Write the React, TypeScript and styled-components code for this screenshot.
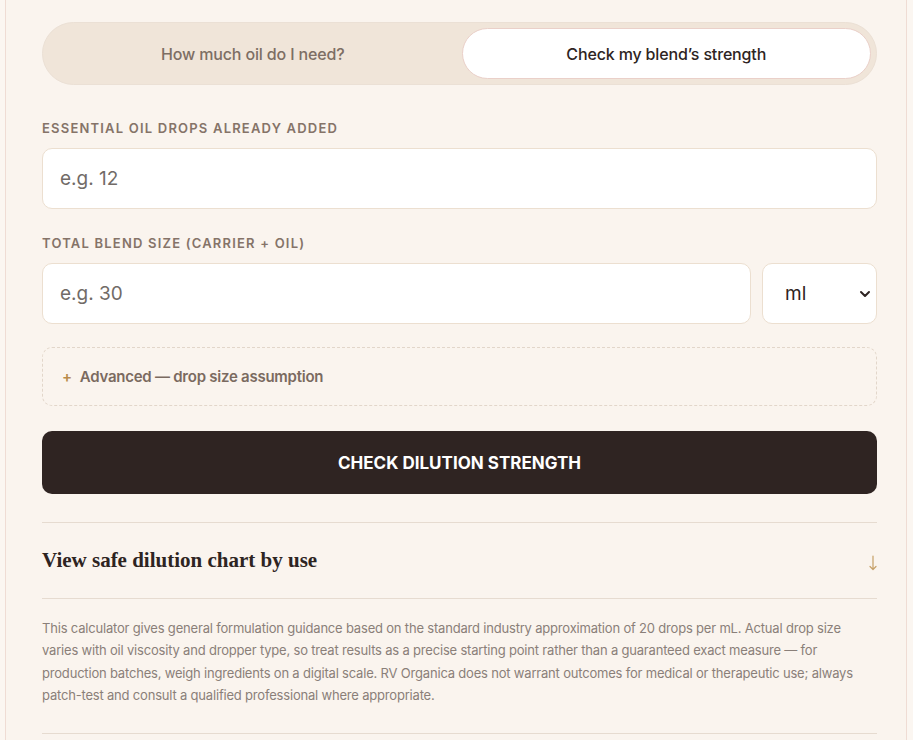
import {createGlobalStyle, styled} from "styled-components";

const GlobalStyle = createGlobalStyle`
    html, body {
        margin: 0;
        padding: 0;
        background: #fbf6f1;
    }

    body {
        font-family: Inter, "Noto Sans", sans-serif;
        color: #2e2422;
    }

    * {
        box-sizing: border-box;
    }
`

const Card = styled.div`
    margin: -1px 6px 0 5px;
    padding: 23px 29px 40px 36px;
    background: #faf4ee;
    border: 1px solid #efdcd4;
    border-top: none;
    display: flex;
    flex-direction: column;
`

const Tabs = styled.div`
    display: grid;
    grid-template-columns: 1fr 1fr;
    gap: 4px;
    height: 63px;
    padding: 5px;
    border-radius: 999px;
    background: #f0e5d9;
    border: 1px solid #ebe0d5;
`

const Tab = styled.button<{ $active?: boolean }>`
    border-radius: 999px;
    font-family: Inter, "Noto Sans", sans-serif;
    font-size: 16px;
    font-weight: 500;
    letter-spacing: -0.15px;
    cursor: pointer;
    color: ${p => p.$active ? '#2e2422' : '#7d6e64'};
    background: ${p => p.$active ? '#ffffff' : 'transparent'};
    border: 1px solid ${p => p.$active ? '#ead0c9' : 'transparent'};
`

const Field = styled.div`
    display: flex;
    flex-direction: column;
    gap: 12px;
    margin-top: 35px;

    & + & {
        margin-top: 26px;
    }
`

const Label = styled.label`
    font-size: 13px;
    font-weight: 600;
    letter-spacing: 1.2px;
    text-transform: uppercase;
    color: #857368;
`

const Row = styled.div`
    display: flex;
    gap: 11px;
`

const Input = styled.input<{ $grow?: boolean }>`
    flex: ${p => p.$grow ? '1 1 auto' : 'none'};
    min-width: 0;
    height: 61px;
    padding: 0 17px;
    border-radius: 10px;
    border: 1px solid #ecdfd0;
    background: #ffffff;
    font-family: Inter, "Noto Sans", sans-serif;
    font-size: 19px;
    color: #2e2422;
    outline: none;

    &::placeholder {
        color: #716b67;
    }
`

const SelectBox = styled.div`
    position: relative;
    width: 115px;
    flex-shrink: 0;

    svg {
        position: absolute;
        right: 6px;
        top: 25px;
        pointer-events: none;
    }
`

const Select = styled.select`
    appearance: none;
    width: 100%;
    height: 61px;
    padding: 0 22px;
    border-radius: 10px;
    border: 1px solid #ecdfd0;
    background: #ffffff;
    font-family: Inter, "Noto Sans", sans-serif;
    font-size: 19px;
    color: #2e2422;
    outline: none;
`

const Advanced = styled.div`
    margin-top: 23px;
    height: 59px;
    padding: 0 19px;
    display: flex;
    align-items: center;
    gap: 8px;
    border-radius: 10px;
    border: 1px dashed #e2d6ca;
    font-size: 15px;
    font-weight: 600;
    letter-spacing: -0.25px;
    color: #7a6a60;

    .plus {
        color: #b98b4c;
        font-weight: 600;
    }
`

const SubmitButton = styled.button`
    margin-top: 25px;
    height: 63px;
    border: none;
    border-radius: 10px;
    background: #2f2422;
    color: #ffffff;
    font-family: Inter, "Noto Sans", sans-serif;
    font-size: 17px;
    font-weight: 700;
    letter-spacing: 0;
    cursor: pointer;
`

const ChartToggle = styled.div`
    margin-top: 28px;
    height: 77px;
    display: flex;
    align-items: center;
    justify-content: space-between;
    border-top: 1px solid #e6dbd0;
    border-bottom: 1px solid #e6dbd0;

    .title {
        font-family: "Liberation Serif", "DejaVu Serif", serif;
        font-size: 21px;
        font-weight: 700;
        color: #2e2422;
    }

    svg {
        margin-right: -1px;
        margin-top: 4px;
    }
`

const Disclaimer = styled.p`
    margin: 0;
    padding: 18px 0 26px;
    font-size: 13px;
    line-height: 22.4px;
    color: #8a7f79;
    letter-spacing: -0.19px;
    border-bottom: 1px solid #e6dbd0;
`

export default function App() {
    return (
        <>
            <GlobalStyle/>
            <Card>
                <Tabs>
                    <Tab>How much oil do I need?</Tab>
                    <Tab $active>Check my blend’s strength</Tab>
                </Tabs>

                <Field>
                    <Label>Essential oil drops already added</Label>
                    <Input placeholder={'e.g. 12'}/>
                </Field>

                <Field>
                    <Label>Total blend size (carrier + oil)</Label>
                    <Row>
                        <Input $grow placeholder={'e.g. 30'}/>
                        <SelectBox>
                            <Select defaultValue={'ml'}>
                                <option value={'ml'}>ml</option>
                                <option value={'oz'}>oz</option>
                            </Select>
                            <svg width="12" height="12" viewBox="0 0 12 12" fill="none">
                                <path d="M2 4l4 4 4-4" stroke="#2e2422" strokeWidth="2" strokeLinecap="round" strokeLinejoin="round"/>
                            </svg>
                        </SelectBox>
                    </Row>
                </Field>

                <Advanced>
                    <span className={'plus'}>+</span>
                    <span>Advanced — drop size assumption</span>
                </Advanced>

                <SubmitButton>CHECK DILUTION STRENGTH</SubmitButton>

                <ChartToggle>
                    <span className={'title'}>View safe dilution chart by use</span>
                    <svg width="10" height="16" viewBox="0 0 10 16" fill="none">
                        <path d="M5 1v13.5M2 11.5l3 3 3-3" stroke="#c6a068" strokeWidth="1.2" strokeLinecap="round"
                              strokeLinejoin="round"/>
                    </svg>
                </ChartToggle>

                <Disclaimer>
                    This calculator gives general formulation guidance based on the standard industry approximation of
                    20 drops per mL. Actual drop size varies with oil viscosity and dropper type, so treat results as a
                    precise starting point rather than a guaranteed exact measure — for production batches, weigh
                    ingredients on a digital scale. RV Organica does not warrant outcomes for medical or therapeutic
                    use; always patch-test and consult a qualified professional where appropriate.
                </Disclaimer>
            </Card>
        </>
    )
}
